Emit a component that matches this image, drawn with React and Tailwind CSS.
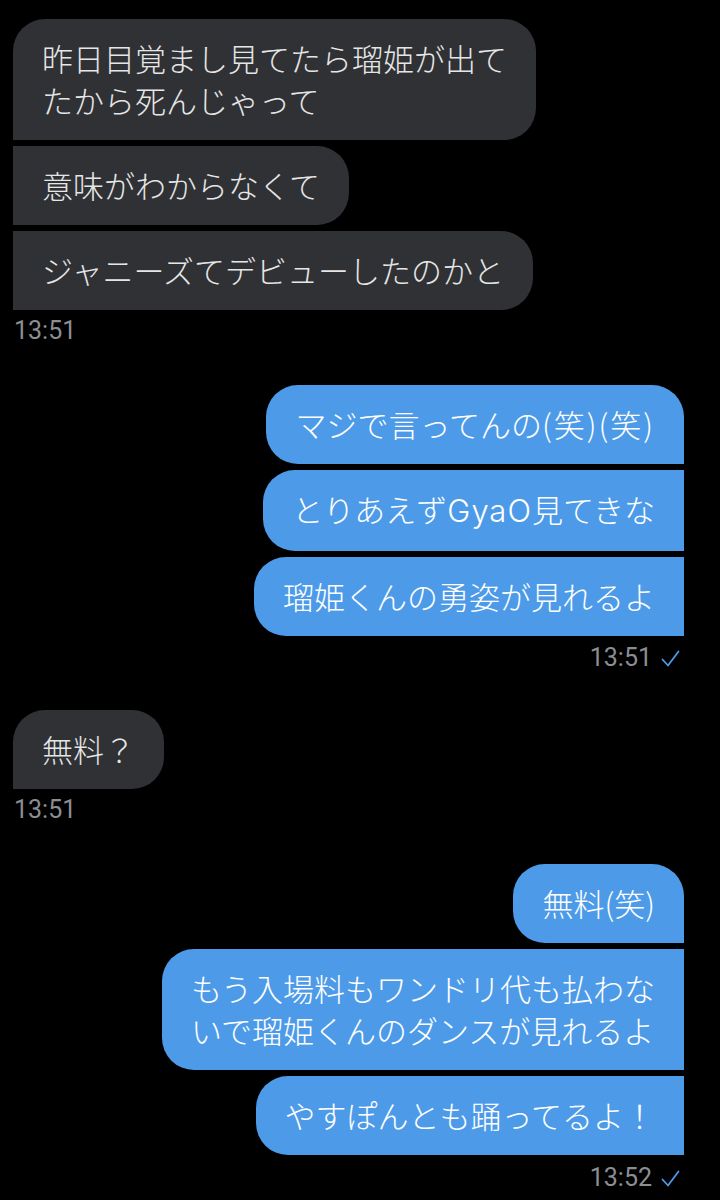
import React from 'react'

const CJK = { fontFamily: '"Noto Sans CJK JP", "Noto Sans", sans-serif' }
const TIME = { fontFamily: 'Roboto, "Liberation Sans", sans-serif' }

function Check() {
  return (
    <svg width="19" height="17" viewBox="0 0 19 17" fill="none" className="ml-[9px]">
      <path d="M1.5 9.5 L7 15.5 L17.5 1.5" stroke="#4d9be8" strokeWidth="1.8" strokeLinecap="round" strokeLinejoin="round" />
    </svg>
  )
}

function Bubble({ side, first, lines }) {
  const base = 'pt-[18px] pb-[19px] px-[29px] text-[31px] leading-[42px] font-light whitespace-nowrap rounded-[32px]'
  let cls
  if (side === 'left') {
    cls = `${base} bg-[#2f3135] text-[#e6e6e6] ${first ? 'rounded-bl-none' : 'rounded-l-none'}`
  } else {
    cls = `${base} bg-[#4d9be8] text-white ${first ? 'rounded-br-none' : 'rounded-r-none'}`
  }
  return (
    <div className={cls} style={CJK}>
      {lines.map((l, i) => (
        <div key={i}>{l}</div>
      ))}
    </div>
  )
}

function Group({ side, messages, time, className, timeGap }) {
  const left = side === 'left'
  return (
    <div className={`flex flex-col ${left ? 'items-start' : 'items-end'} ${className}`}>
      <div className={`flex flex-col gap-[6px] ${left ? 'items-start' : 'items-end'}`}>
        {messages.map((m, i) => (
          <Bubble key={i} side={side} first={i === 0} lines={m} />
        ))}
      </div>
      <div
        className={`flex items-center text-[25px] leading-[28px] text-[#8b8e93] ${timeGap} ${left ? 'pl-[1px]' : 'pr-[4px]'}`}
        style={TIME}
      >
        <span>{time}</span>
        {!left && <Check />}
      </div>
    </div>
  )
}

const latin = { fontFamily: 'Inter, "Noto Sans", sans-serif' }

export default function App() {
  return (
    <div className="min-h-[1200px] w-[720px] bg-black pt-[19px] pl-[13px] pr-[36px] overflow-hidden">
      <Group
        side="left"
        time="13:51"
        timeGap="mt-[7px]"
        messages={[
          ['昨日目覚まし見てたら瑠姫が出て', 'たから死んじゃって'],
          ['意味がわからなくて'],
          ['ジャニーズてデビューしたのかと'],
        ]}
      />
      <Group
        side="right"
        time="13:51"
        timeGap="mt-[8px]"
        className="mt-[40px]"
        messages={[
          [<>マジで言ってんの<span className="tracking-[2px]">(笑)(笑)</span></>],
          [<>とりあえず<span className="tracking-[1px]" style={latin}>GyaO</span>見てきな</>],
          ['瑠姫くんの勇姿が見れるよ'],
        ]}
      />
      <Group
        side="left"
        time="13:51"
        timeGap="mt-[7px]"
        className="mt-[38px]"
        messages={[['無料？']]}
      />
      <Group
        side="right"
        time="13:52"
        timeGap="mt-[9px]"
        className="mt-[40px]"
        messages={[
          ['無料(笑)'],
          ['もう入場料もワンドリ代も払わな', 'いで瑠姫くんのダンスが見れるよ'],
          ['やすぽんとも踊ってるよ！'],
        ]}
      />
    </div>
  )
}
